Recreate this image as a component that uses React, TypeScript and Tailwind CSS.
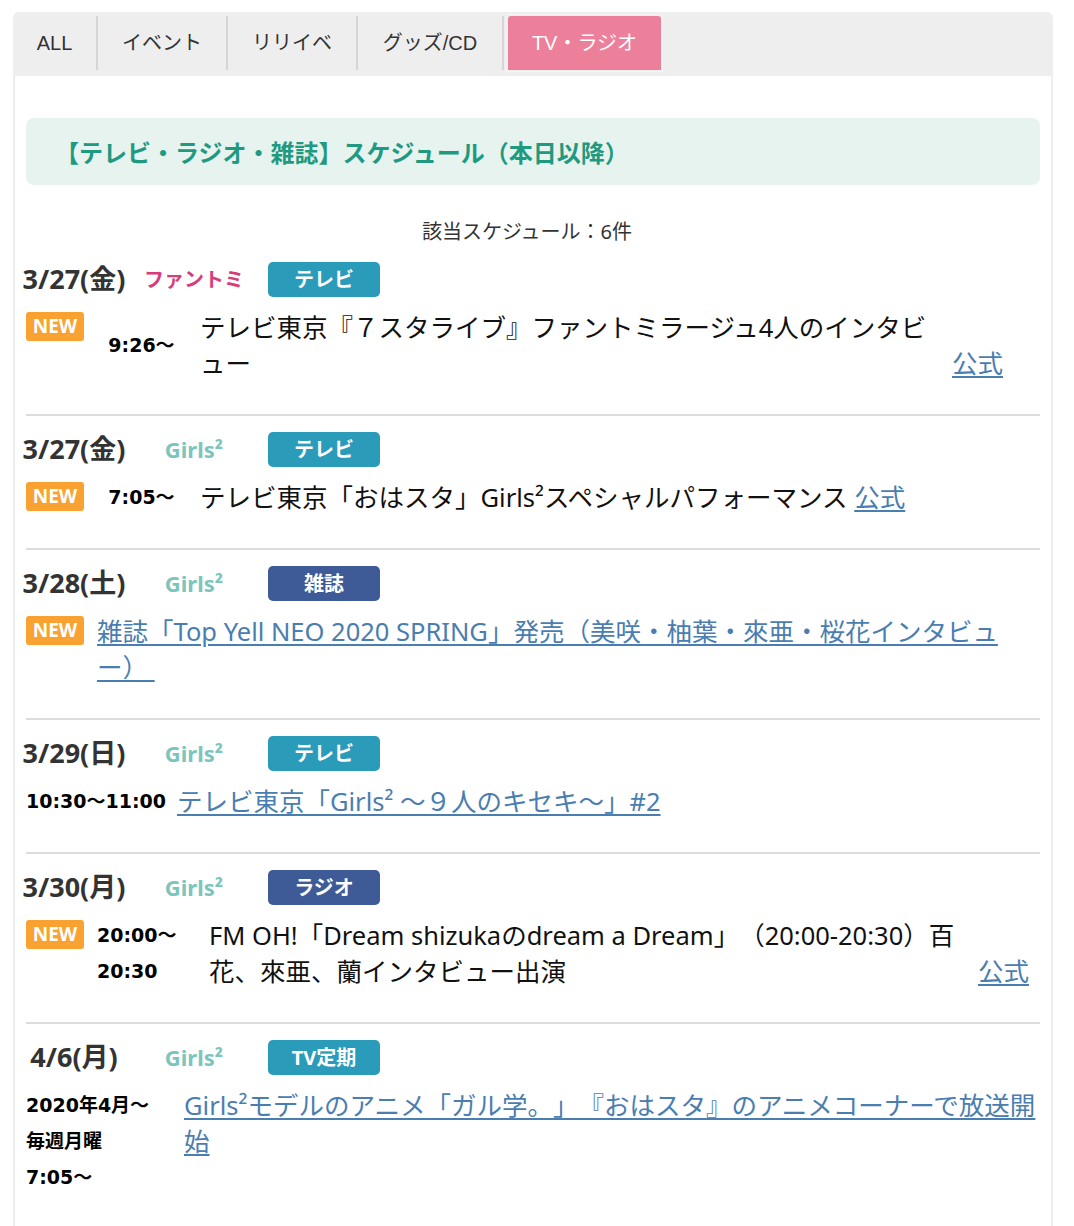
import type { ReactNode } from 'react';

const tabs = [
    { label: 'ALL', cls: 'w-[85px]' },
    { label: 'イベント', cls: 'w-[130px]' },
    { label: 'リリイベ', cls: 'w-[130px]' },
    { label: 'グッズ/CD', cls: 'w-[146px]' },
];

const groups = {
    fantomi: { name: 'ファントミ', cls: 'text-[20px] text-[#d63d7a]' },
    girls: { name: 'Girls²', cls: 'text-[22px] text-[#7cc5bd]' },
};

const badges = {
    tv: { label: 'テレビ', cls: 'bg-[#2b9bba]' },
    mag: { label: '雑誌', cls: 'bg-[#3e5b97]' },
    radio: { label: 'ラジオ', cls: 'bg-[#3e5b97]' },
    tvReg: { label: 'TV定期', cls: 'bg-[#2b9bba]' },
};

// time cells use a wider latin face so the digits take the room they do in the original
const timeCls = "font-['DejaVu_Sans','Noto_Sans_CJK_JP',sans-serif] text-[19px] font-bold text-black";

function NewMark() {
    return (
        <span className="mt-[3px] flex h-[29px] w-[58px] shrink-0 items-center justify-center self-start rounded-[3px] bg-[#f9a232] text-[19px] font-bold leading-none text-white">
            NEW
        </span>
    );
}

function Link({ children }: { children: ReactNode }) {
    return (
        <a href="#" className="text-[#4a7db0] underline underline-offset-[3px]">
            {children}
        </a>
    );
}

function Entry({
    date,
    group,
    badge,
    last,
    children,
}: {
    date: string;
    group: { name: string; cls: string };
    badge: { label: string; cls: string };
    last?: boolean;
    children: ReactNode;
}) {
    return (
        <div className={`pt-4 pb-[33px] ${last ? '' : 'border-b-2 border-[#dddddd]'}`}>
            <div className="flex h-[35px] items-center">
                <div className="-ml-2 w-[112px] whitespace-nowrap text-center text-[27px] font-bold text-[#333333]">{date}</div>
                <div className={`ml-2 w-[112px] whitespace-nowrap text-center font-bold ${group.cls}`}>{group.name}</div>
                <div className={`ml-[18px] flex h-[35px] w-[112px] items-center justify-center rounded-[5px] text-[20px] font-bold text-white ${badge.cls}`}>
                    {badge.label}
                </div>
            </div>
            <div className="mt-3 flex text-[25.5px] leading-[36px] text-[#111111]">{children}</div>
        </div>
    );
}

export default function App() {
    return (
        <div className="min-h-[1226px] bg-white pt-[12px] font-['Noto_Sans','Noto_Sans_CJK_JP',sans-serif] [text-spacing-trim:space-all]">
            <div className="mx-[13px] w-[1040px]">
                <div className="flex h-[64px] rounded-t-[6px] bg-[#eeeeee] pt-1 font-['Liberation_Sans','Noto_Sans_CJK_JP',sans-serif] text-[20px] text-[#333333]">
                    {tabs.map(t => (
                        <div key={t.label} className={`flex h-[54px] items-center justify-center border-r-2 border-[#d6d6d6] ${t.cls}`}>
                            {t.label}
                        </div>
                    ))}
                    <div className="ml-1 flex h-[54px] w-[153px] items-center justify-center rounded-t-[3px] bg-[#ec809b] text-white outline-1 outline-offset-[1px] outline-dotted outline-[#fafafa]">
                        TV・ラジオ
                    </div>
                </div>

                <div className="border-x-2 border-[#eeeeee] px-[11px] pt-[42px]">
                    <div className="flex h-[67px] items-center rounded-lg bg-[#e7f3ef] pl-[29px] font-['Noto_Sans_CJK_JP',sans-serif] text-[24px] font-bold text-[#1f9a80]">
                        【テレビ・ラジオ・雑誌】スケジュール（本日以降）
                    </div>

                    <p className="mt-[33px] pr-3 text-center text-[20px] leading-[28px] text-[#333333]">該当スケジュール：6件</p>

                    <Entry date="3/27(金)" group={groups.fantomi} badge={badges.tv}>
                        <NewMark />
                        <span className={`ml-[13px] w-[89px] shrink-0 self-center text-center ${timeCls}`}>9:26〜</span>
                        <span className="ml-[14px] w-[740px] shrink-0">
                            テレビ東京『７スタライブ』ファントミラージュ4人のインタビ
                            <br />
                            ュー
                        </span>
                        <span className="ml-3 self-end">
                            <Link>公式</Link>
                        </span>
                    </Entry>

                    <Entry date="3/27(金)" group={groups.girls} badge={badges.tv}>
                        <NewMark />
                        <span className={`ml-[13px] w-[89px] shrink-0 text-center ${timeCls}`}>7:05〜</span>
                        <span className="ml-[14px]">
                            テレビ東京「おはスタ」Girls²スペシャルパフォーマンス <Link>公式</Link>
                        </span>
                    </Entry>

                    <Entry date="3/28(土)" group={groups.girls} badge={badges.mag}>
                        <NewMark />
                        <span className="ml-[13px]">
                            <Link>
                                雑誌「Top Yell NEO 2020 SPRING」発売（美咲・柚葉・來亜・桜花インタビュ
                                <br />
                                ー）&nbsp;
                            </Link>
                        </span>
                    </Entry>

                    <Entry date="3/29(日)" group={groups.girls} badge={badges.tv}>
                        <span className={`whitespace-nowrap ${timeCls}`}>10:30〜11:00</span>
                        <span className="ml-[11px]">
                            <Link>テレビ東京「Girls² 〜９人のキセキ〜」#2</Link>
                        </span>
                    </Entry>

                    <Entry date="3/30(月)" group={groups.girls} badge={badges.radio}>
                        <NewMark />
                        <span className={`ml-[13px] w-[100px] shrink-0 ${timeCls}`}>
                            20:00〜
                            <br />
                            20:30
                        </span>
                        <span className="ml-3 w-[756px] shrink-0">
                            FM OH!「Dream shizukaのdream a Dream」（20:00-20:30）百
                            <br />
                            花、來亜、蘭インタビュー出演
                        </span>
                        <span className="ml-[13px] self-end">
                            <Link>公式</Link>
                        </span>
                    </Entry>

                    <Entry date="4/6(月)" group={groups.girls} badge={badges.tvReg} last>
                        <span className={`w-[145px] shrink-0 ${timeCls}`}>
                            2020年4月〜
                            <br />
                            毎週月曜
                            <br />
                            7:05〜
                        </span>
                        <span className="ml-[13px]">
                            <Link>
                                Girls²モデルのアニメ「ガル学。」『おはスタ』のアニメコーナーで放送開
                                <br />
                                始
                            </Link>
                        </span>
                    </Entry>
                </div>
            </div>
        </div>
    );
}
